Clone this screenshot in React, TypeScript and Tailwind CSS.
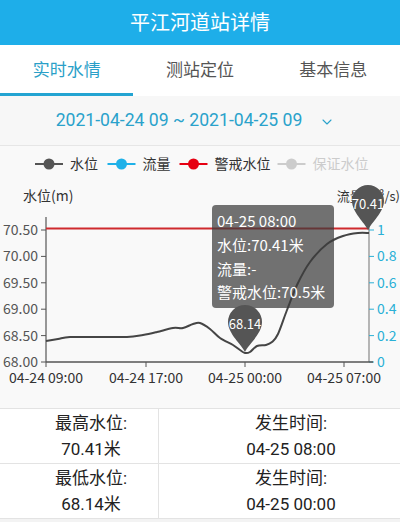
import { ChevronDown } from "lucide-react";

const CJK = '"Noto Sans CJK SC", "Noto Sans", sans-serif';

// chart geometry (svg coords, chart box starts at page y=146)
const X0 = 46;
const X1 = 369;
const BOTTOM = 216;
const yOf = (v: number) => BOTTOM - (v - 68) * 52.8;

const levelPoints: [number, number][] = [
  [46, 341], [58, 339], [70, 337], [100, 337], [127, 337], [143, 335], [157, 332],
  [173, 328], [183, 328], [193, 324], [200, 323], [210, 329], [220, 338], [233, 345],
  [240, 350], [245, 353], [250, 352], [257, 346], [266, 345], [272, 342], [278, 334],
  [287, 310], [297, 285], [310, 262], [327, 244], [343, 236], [358, 233], [369, 233],
].map(([x, y]) => [x, y - 146] as [number, number]);

function smoothPath(pts: [number, number][]) {
  let d = `M${pts[0][0]},${pts[0][1]}`;
  for (let i = 0; i < pts.length - 1; i++) {
    const p0 = pts[i - 1] || pts[i];
    const p1 = pts[i];
    const p2 = pts[i + 1];
    const p3 = pts[i + 2] || p2;
    const c1x = p1[0] + (p2[0] - p0[0]) / 6;
    const c1y = p1[1] + (p2[1] - p0[1]) / 6;
    const c2x = p2[0] - (p3[0] - p1[0]) / 6;
    const c2y = p2[1] - (p3[1] - p1[1]) / 6;
    d += ` C${c1x.toFixed(1)},${c1y.toFixed(1)} ${c2x.toFixed(1)},${c2y.toFixed(1)} ${p2[0]},${p2[1]}`;
  }
  return d;
}

function pinPath(cx: number, cy: number, r: number, ty: number) {
  return `M${cx},${ty} C${cx - 3},${ty - 7} ${cx - r},${cy + r * 0.7} ${cx - r},${cy} A${r},${r} 0 1 1 ${cx + r},${cy} C${cx + r},${cy + r * 0.7} ${cx + 3},${ty - 7} ${cx},${ty} Z`;
}

const legend = [
  { x: 49, color: "#555555", label: "水位", text: "#333333" },
  { x: 121.5, color: "#1fb1e8", label: "流量", text: "#333333" },
  { x: 193.5, color: "#e60012", label: "警戒水位", text: "#333333" },
  { x: 291.5, color: "#cccccc", label: "保证水位", text: "#cccccc" },
];

const leftTicks = ["70.50", "70.00", "69.50", "69.00", "68.50", "68.00"];
const rightTicks = ["1", "0.8", "0.6", "0.4", "0.2", "0"];
const xTicks = [
  { x: 46, label: "04-24 09:00" },
  { x: 146, label: "04-24 17:00" },
  { x: 245, label: "04-25 00:00" },
  { x: 344, label: "04-25 07:00" },
];

function Chart() {
  return (
    <svg width={400} height={262} viewBox="0 0 400 262" style={{ fontFamily: CJK }}>
      {legend.map((l) => (
        <g key={l.label}>
          <line x1={l.x - 14} y1={18} x2={l.x + 14} y2={18} stroke={l.color} strokeWidth={2} />
          <circle cx={l.x} cy={18} r={5.5} fill={l.color} />
          <text x={l.x + 21} y={23} fontSize={14} fill={l.text}>
            {l.label}
          </text>
        </g>
      ))}

      <text x={23} y={55} fontSize={14} fill="#333333">
        水位(m)
      </text>
      <text x={400} y={55} fontSize={13} fill="#333333" textAnchor="end">
        流量(m³/s)
      </text>

      {/* left axis */}
      <line x1={X0} y1={71} x2={X0} y2={BOTTOM} stroke="#555555" strokeWidth={1.2} />
      {leftTicks.map((t) => {
        const y = yOf(parseFloat(t));
        return (
          <g key={t}>
            <line x1={X0 - 5} y1={y} x2={X0} y2={y} stroke="#555555" />
            <text x={X0 - 8} y={y + 5} fontSize={14} fill="#555555" textAnchor="end">
              {t}
            </text>
          </g>
        );
      })}

      {/* right axis */}
      <line x1={X1} y1={71} x2={X1} y2={BOTTOM} stroke="#888888" strokeWidth={1.2} />
      {rightTicks.map((t, i) => {
        const y = yOf(70.5 - i * 0.5);
        return (
          <g key={t}>
            <line x1={X1} y1={y} x2={X1 + 5} y2={y} stroke="#2ab0d6" />
            <text x={X1 + 8} y={y + 5} fontSize={14} fill="#2ab0d6">
              {t}
            </text>
          </g>
        );
      })}

      {/* x axis */}
      <line x1={X0} y1={BOTTOM} x2={373} y2={BOTTOM} stroke="#555555" strokeWidth={1.5} />
      {xTicks.map((t) => (
        <g key={t.label}>
          <line x1={t.x} y1={BOTTOM} x2={t.x} y2={BOTTOM + 5} stroke="#555555" />
          <text x={t.x} y={BOTTOM + 21} fontSize={14} fill="#333333" textAnchor="middle">
            {t.label}
          </text>
        </g>
      ))}

      {/* warning level */}
      <line x1={X0} y1={82.5} x2={X1} y2={82.5} stroke="#cf2a2e" strokeWidth={2} />

      {/* water level */}
      <path d={smoothPath(levelPoints)} fill="none" stroke="#454545" strokeWidth={2} />

      {/* tooltip */}
      <rect x={212} y={59} width={122} height={103} rx={4} fill="rgba(60,60,60,0.72)" />
      <g fontSize={15} fill="#ffffff">
        <text x={217} y={81}>04-25 08:00</text>
        <text x={217} y={105}>水位:70.41米</text>
        <text x={217} y={129}>流量:-</text>
        <text x={217} y={152}>警戒水位:70.5米</text>
      </g>

      {/* markers */}
      <path d={pinPath(368, 55, 16, 84)} fill="#555555" />
      <text x={368} y={63} fontSize={13} fill="#ffffff" textAnchor="middle">
        70.41
      </text>
      <path d={pinPath(245, 176, 17, 206)} fill="#555555" />
      <text x={245} y={183} fontSize={13} fill="#ffffff" textAnchor="middle">
        68.14
      </text>
    </svg>
  );
}

function StatRow({ label, value, timeValue }: { label: string; value: string; timeValue: string }) {
  return (
    <div className="flex h-[55px] border-b border-[#e3e3e3]">
      <div className="flex w-[159px] flex-col items-center justify-center border-r border-[#e3e3e3] pl-[24px] leading-[26px]">
        <span>{label}</span>
        <span>{value}</span>
      </div>
      <div className="flex flex-1 flex-col items-center justify-center pl-[23px] leading-[26px]">
        <span>发生时间:</span>
        <span>{timeValue}</span>
      </div>
    </div>
  );
}

export default function App() {
  return (
    <div
      className="flex h-[522px] w-[400px] flex-col overflow-hidden bg-[#f3f3f3]"
      style={{ fontFamily: '"Roboto", "Noto Sans CJK SC", sans-serif' }}
    >
      <header className="flex h-[45px] items-center justify-center bg-[#1eaee9] text-[20px] text-white">
        平江河道站详情
      </header>

      <nav className="grid h-[51px] grid-cols-3 bg-white text-[17px]">
        <div className="relative flex items-center justify-center text-[#2a9fc8]">
          实时水情
          <div className="absolute bottom-0 left-0 h-[3px] w-full bg-[#23a4d2]" />
        </div>
        <div className="flex items-center justify-center text-[#555555]">测站定位</div>
        <div className="flex items-center justify-center text-[#555555]">基本信息</div>
      </nav>

      <div className="flex h-[50px] items-center justify-center gap-[17px] border-b border-[#e6e6e6] bg-[#f7f7f7] pr-[9px] text-[17.6px] text-[#2aa2cb]">
        <span>2021-04-24 09 ~ 2021-04-25 09</span>
        <ChevronDown size={16} strokeWidth={1.6} className="mt-[3px]" />
      </div>

      <div className="h-[262px] bg-[#f9f9f9]">
        <Chart />
      </div>

      <div className="border-t border-[#e3e3e3] bg-white text-[17px] text-[#222222]">
        <StatRow label="最高水位:" value="70.41米" timeValue="04-25 08:00" />
        <StatRow label="最低水位:" value="68.14米" timeValue="04-25 00:00" />
      </div>
    </div>
  );
}
